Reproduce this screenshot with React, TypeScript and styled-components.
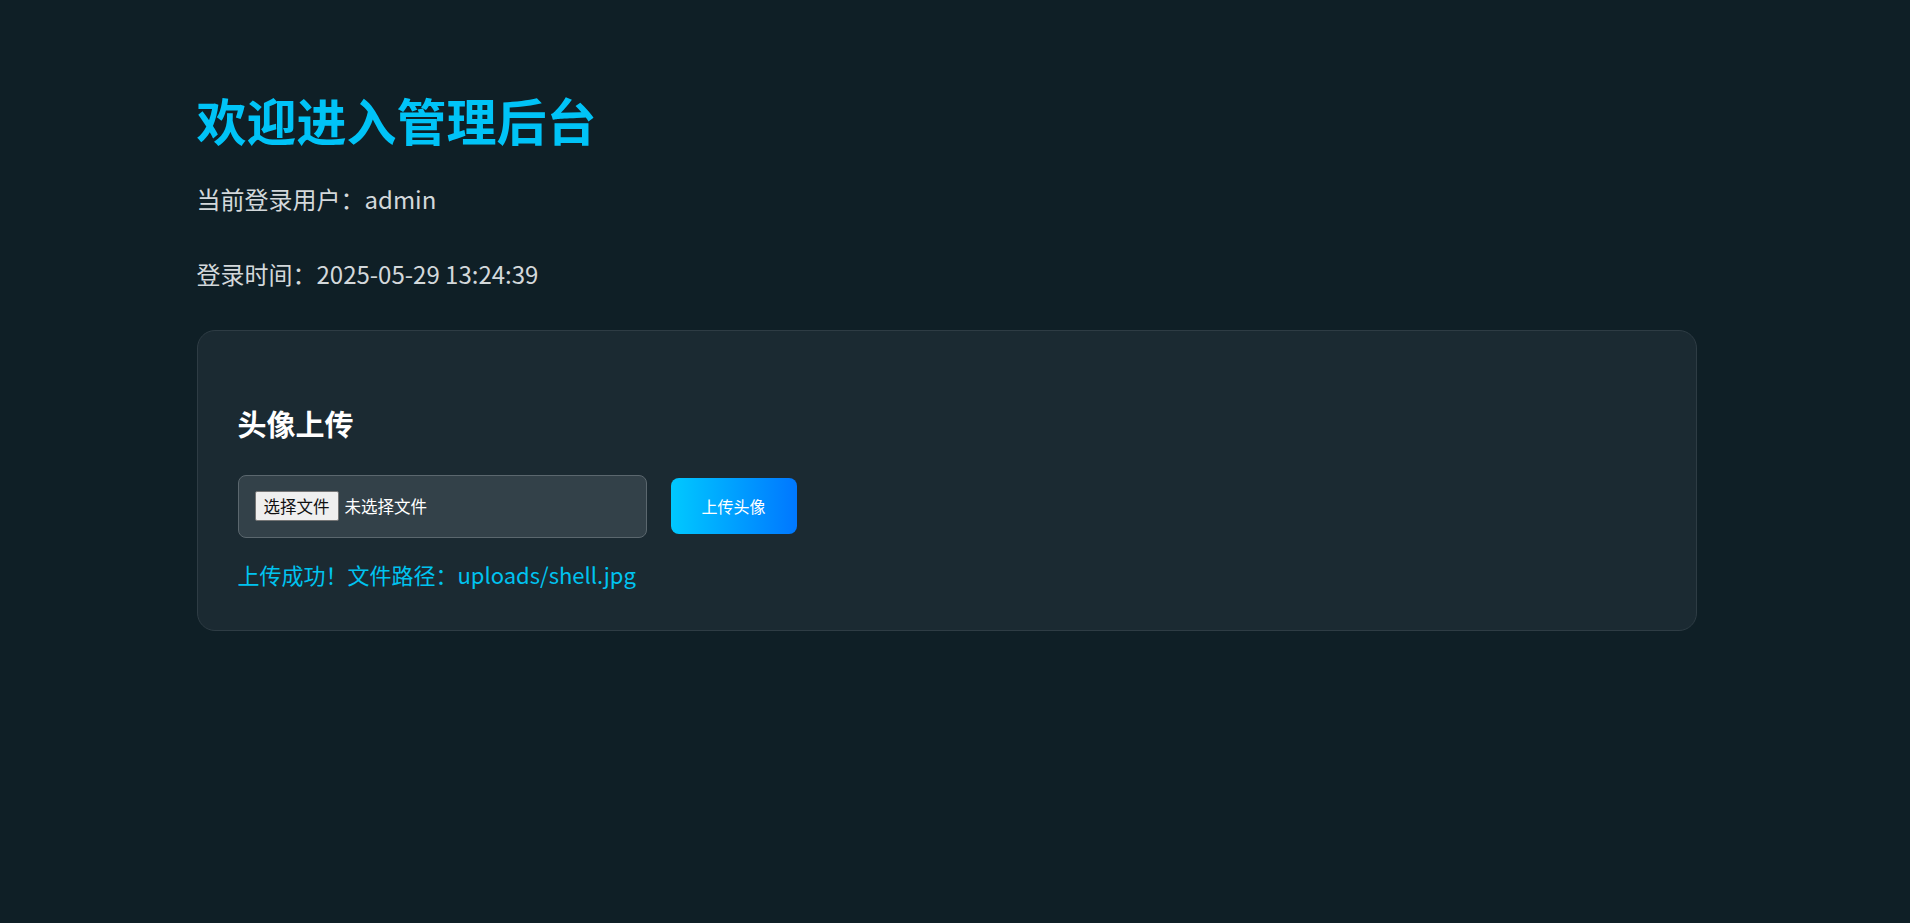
import styled, { createGlobalStyle } from 'styled-components'

const GlobalStyle = createGlobalStyle`
  * {
    box-sizing: border-box;
  }
  body {
    margin: 0;
    background: #0f1f26;
    font-family: "Noto Sans CJK SC", "Noto Sans", sans-serif;
    color: #d3d8db;
  }
`

// right padding keeps the centre where it sits beside a classic scrollbar
const Page = styled.main`
  box-sizing: content-box;
  min-height: 100vh;
  padding: 64px 17px 64px 0;
`

const Container = styled.div`
  width: 1500px;
  margin: 0 auto;
`

const Title = styled.h1`
  margin: 25px 0 32px;
  font-size: 50px;
  line-height: 1.2;
  font-weight: 700;
  color: #00c3f7;
`

const InfoList = styled.div`
  display: flex;
  flex-direction: column;
  gap: 39px;
  margin-bottom: 38px;
`

const Info = styled.p`
  margin: 0;
  font-size: 24px;
  line-height: 36px;
  color: #d3d8db;
`

const Card = styled.section`
  background: #1b2a32;
  border: 1px solid #2e3c44;
  border-radius: 18px;
  padding: 40px 40px 39px;
`

const CardTitle = styled.h3`
  margin: 31px 0 29px;
  font-size: 29px;
  line-height: 1.5;
  font-weight: 700;
  color: #ffffff;
`

const UploadRow = styled.form`
  display: flex;
  align-items: center;
  gap: 24px;
`

const FileBox = styled.label`
  display: flex;
  align-items: center;
  gap: 6px;
  width: 409px;
  height: 63px;
  padding: 0 16px;
  background: #334149;
  border: 1px solid #5b676e;
  border-radius: 8px;
  cursor: pointer;

  input {
    display: none;
  }
`

const PickButton = styled.span`
  display: inline-flex;
  align-items: center;
  height: 30px;
  padding: 0 8px;
  background: #efefef;
  border: 1px solid #767676;
  border-radius: 2px;
  font-size: 16.5px;
  color: #111;
`

const FileName = styled.span`
  font-size: 16.5px;
  color: #ffffff;
`

const UploadButton = styled.button`
  height: 56px;
  padding: 0 31px;
  border: none;
  border-radius: 8px;
  background: linear-gradient(90deg, #00c9ff 0%, #0077ff 100%);
  color: #ffffff;
  font-family: inherit;
  font-size: 16px;
  cursor: pointer;
`

const Message = styled.p`
  margin: 20px 0 0;
  font-size: 22px;
  line-height: 1.5;
  color: #00c3f0;
`

export default function App() {
  return (
    <>
      <GlobalStyle />
      <Page>
        <Container>
          <Title>欢迎进入管理后台</Title>
          <InfoList>
            <Info>当前登录用户：admin</Info>
            <Info>登录时间：2025-05-29 13:24:39</Info>
          </InfoList>
          <Card>
            <CardTitle>头像上传</CardTitle>
            <UploadRow onSubmit={(e) => e.preventDefault()}>
              <FileBox>
                <input type="file" name="avatar" />
                <PickButton>选择文件</PickButton>
                <FileName>未选择文件</FileName>
              </FileBox>
              <UploadButton type="submit">上传头像</UploadButton>
            </UploadRow>
            <Message>上传成功！文件路径：uploads/shell.jpg</Message>
          </Card>
        </Container>
      </Page>
    </>
  )
}
